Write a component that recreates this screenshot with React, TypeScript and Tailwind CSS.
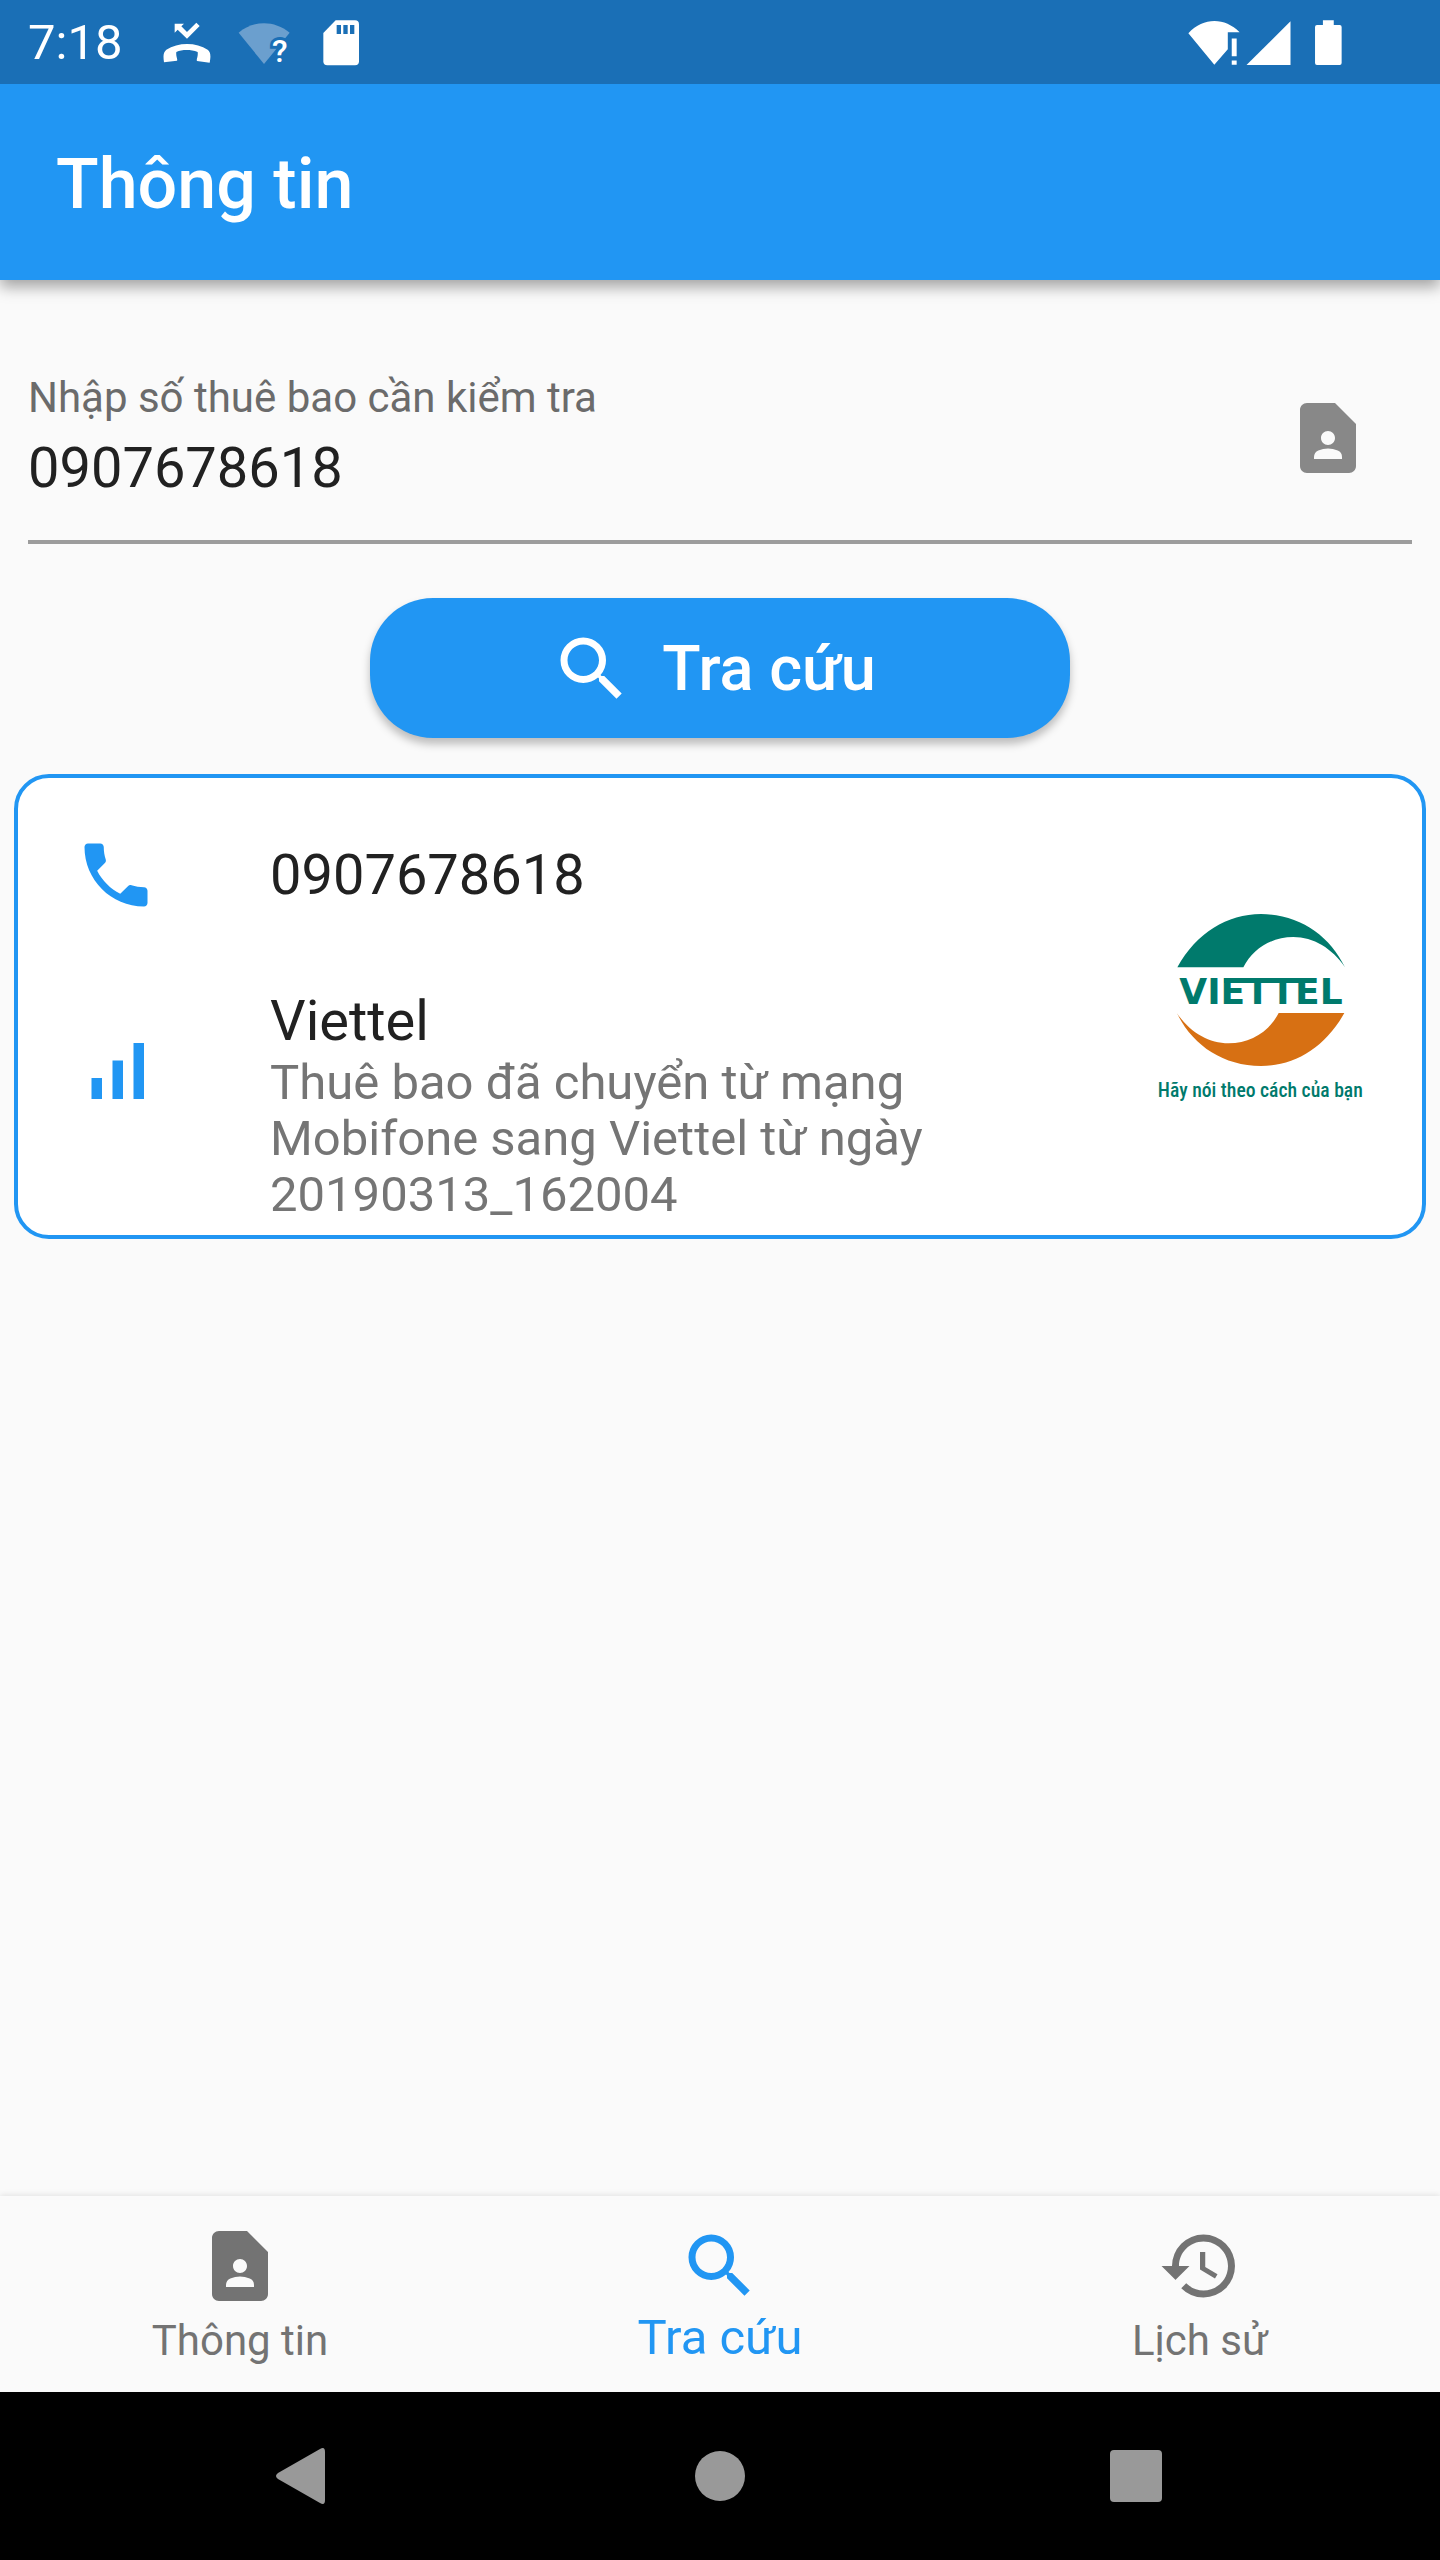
import { useState } from "react"
import { MdContactPage, MdHistory, MdPhone, MdSearch, MdSignalCellularAlt } from "react-icons/md"

const tabs = [
  { id: "info", label: "Thông tin", icon: MdContactPage },
  { id: "lookup", label: "Tra cứu", icon: MdSearch },
  { id: "history", label: "Lịch sử", icon: MdHistory },
]

const result = {
  phone: "0907678618",
  carrier: "Viettel",
  note: "Thuê bao đã chuyển từ mạng Mobifone sang Viettel từ ngày 20190313_162004",
}

function StatusBar() {
  return (
    <div className="flex h-[84px] items-center justify-between bg-[#1a6fb6] pt-0.5 pr-[98px] pl-7 text-white">
      <div className="flex items-center">
        <span className="mr-[26px] text-[49px] leading-[56px]">7:18</span>

        {/* missed call */}
        <span className="flex w-[77px] justify-center">
          <svg viewBox="490 64 144 126" className="h-[42px] w-12" fill="currentColor">
            <path d="M525 69H553L545 77L562 94L590 66L600 76L562 114L534 87L525 96Z" />
            <path d="M493 185C490 165 491 155 500 147C535 124 590 124 624 147C633 155 634 165 630 186L592 181C589 176 596 168 594 154C573 146 548 146 530 154C528 168 535 175 532 180Z" />
          </svg>
        </span>

        {/* wifi without a known network */}
        <span className="flex w-[77px] justify-center">
          <svg viewBox="715 60 156 129" className="h-[43px] w-[52px] overflow-visible">
            <path d="M717 92C762 54 824 54 870 92L793 186Z" fill="#6b9fce" />
            <text
              x="840"
              y="180"
              textAnchor="middle"
              fontSize="96"
              stroke="#1a6fb6"
              strokeWidth="18"
              paintOrder="stroke"
              fill="#fff"
              className="font-medium"
            >
              ?
            </text>
          </svg>
        </span>

        {/* sd card */}
        <span className="flex w-[77px] justify-center">
          <svg viewBox="970 59 108 138" className="h-[46px] w-9">
            <path d="M1008 60H1066Q1078 60 1078 72V183Q1078 195 1066 195H983Q971 195 971 183V98Z" fill="#fff" />
            <path d="M1011 74H1024V101H1011ZM1031 74H1044V101H1031ZM1051 74H1064V101H1051Z" fill="#1a6fb6" />
          </svg>
        </span>
      </div>

      <div className="flex items-center">
        <svg viewBox="144 54 156 140" className="h-[46px] w-[52px]" fill="currentColor">
          <path d="M144 94C190 45 254 45 300 91H264V143L223 190Z" />
          <path d="M276 110H291V164H276ZM276 177H291V190H276Z" />
        </svg>
        <svg viewBox="316 54 134 140" className="ml-1.5 h-[46px] w-[45px]" fill="currentColor">
          <path d="M316 191L450 58V191Z" />
        </svg>
        <svg viewBox="525 56 82 140" className="ml-6 h-[46px] w-[27px]" fill="currentColor">
          <path d="M549 57H582V71H600Q606 71 606 77V187Q606 193 600 193H531Q525 193 525 187V77Q525 71 531 71H549Z" />
        </svg>
      </div>
    </div>
  )
}

function ViettelLogo() {
  return (
    <svg viewBox="168 123 630 630" className="size-[210px] shrink-0" role="img" aria-label="Viettel">
      <path
        d="M232 319C290 214 382 160 483 159C598 160 688 222 735 319C697 262 640 228 580 228C514 228 458 264 430 319Z"
        fill="#007a6c"
      />
      <path
        d="M733 456C675 560 584 615 483 615C368 614 278 553 231 457C269 513 326 547 386 547C452 547 508 511 536 456Z"
        fill="#d77013"
      />
      {/* bar that joins the middle letters */}
      <path d="M372 351H640V366H372Z" fill="#007a6c" />
      <text
        x="483"
        y="428"
        textAnchor="middle"
        fontSize="108"
        fill="#007a6c"
        className="font-['DejaVu_Sans'] font-bold"
      >
        VIETTEL
      </text>
      <text
        x="481"
        y="708"
        textAnchor="middle"
        fontSize="59"
        fill="#007a6c"
        className="font-['Roboto_Condensed','Liberation_Sans_Narrow',Roboto,sans-serif] font-medium"
      >
        Hãy nói theo cách của bạn
      </text>
    </svg>
  )
}

function ResultCard() {
  return (
    <section className="mx-3.5 mt-9 flex items-center rounded-[35px] border-4 border-[#2196f3] bg-white px-14">
      <div className="min-w-0 flex-1 pr-14">
        <div className="flex h-[194px] items-center">
          <MdPhone className="mr-28 size-[84px] shrink-0 text-[#2196f3]" />
          <p className="text-[56px] leading-[66px] text-[#212121]">{result.phone}</p>
        </div>
        <div className="flex items-start pb-3">
          <MdSignalCellularAlt className="mt-[57px] mr-28 size-[84px] shrink-0 text-[#2196f3]" />
          <div className="pt-4">
            <p className="text-[56px] leading-[67px] text-[#212121]">{result.carrier}</p>
            <p className="text-[49px] leading-[56px] text-[#757575]">{result.note}</p>
          </div>
        </div>
      </div>
      <ViettelLogo />
    </section>
  )
}

export default function App() {
  const [activeTab, setActiveTab] = useState("lookup")
  const [phone, setPhone] = useState("0907678618")

  return (
    <div className="flex min-h-screen flex-col bg-[#fafafa] font-[Roboto,sans-serif]">
      <header className="relative z-10 shadow-[0_7px_14px_rgba(0,0,0,0.35)]">
        <StatusBar />
        <div className="flex h-[196px] items-center bg-[#2196f3] px-14 pt-1">
          <h1 className="text-[70px] leading-[84px] font-medium text-white">Thông tin</h1>
        </div>
      </header>

      <main className="flex-1 pt-14">
        <form onSubmit={(e) => e.preventDefault()}>
          <div className="mx-7 flex items-center border-b-4 border-[#9c9c9c] pt-[38px] pr-[42px] pb-[38px]">
            <div className="flex flex-1 flex-col gap-3">
              <label htmlFor="phone" className="text-[42px] leading-[48px] text-[#6b6b6b]">
                Nhập số thuê bao cần kiểm tra
              </label>
              <input
                id="phone"
                type="tel"
                value={phone}
                onChange={(e) => setPhone(e.target.value)}
                className="h-[68px] w-full bg-transparent text-[56px] leading-[68px] text-[#212121] outline-none"
              />
            </div>
            <button type="button" aria-label="Danh bạ">
              <MdContactPage className="size-[84px] text-[#888888]" />
            </button>
          </div>

          <button
            type="submit"
            className="mx-auto mt-[54px] flex h-[140px] w-[700px] items-center justify-center gap-7 rounded-[63px] bg-[#2196f3] pt-0.5 pr-14 pl-[42px] text-[63px] leading-[74px] font-medium text-white shadow-[0_6px_9px_rgba(0,0,0,0.25)]"
          >
            <MdSearch className="size-[84px]" />
            Tra cứu
          </button>
        </form>

        <ResultCard />
      </main>

      <nav className="grid h-[196px] grid-cols-3 shadow-[0_-1px_6px_rgba(0,0,0,0.1)]">
        {tabs.map(({ id, label, icon: Icon }) => (
          <button
            key={id}
            type="button"
            onClick={() => setActiveTab(id)}
            className={`flex flex-col items-center gap-1 pt-7 ${activeTab === id ? "text-[#2196f3]" : "text-[#737373]"}`}
          >
            <Icon className="size-[84px]" />
            <span className={activeTab === id ? "text-[49px] leading-[52px]" : "text-[42px] leading-[58px]"}>
              {label}
            </span>
          </button>
        ))}
      </nav>

      {/* system navigation */}
      <div className="grid h-[168px] grid-cols-3 items-center bg-black px-24 text-[#999999]">
        <button type="button" aria-label="Back" className="flex justify-center">
          <svg viewBox="0 0 84 84" className="size-[84px]" fill="currentColor">
            <path d="M58 15Q63 12 63 18V66Q63 72 58 69L16 45Q12 42 16 39Z" />
          </svg>
        </button>
        <button type="button" aria-label="Home" className="flex justify-center">
          <span className="size-[50px] rounded-full bg-[#999999]" />
        </button>
        <button type="button" aria-label="Recent apps" className="flex justify-center">
          <span className="size-[52px] rounded-[4px] bg-[#999999]" />
        </button>
      </div>
    </div>
  )
}
